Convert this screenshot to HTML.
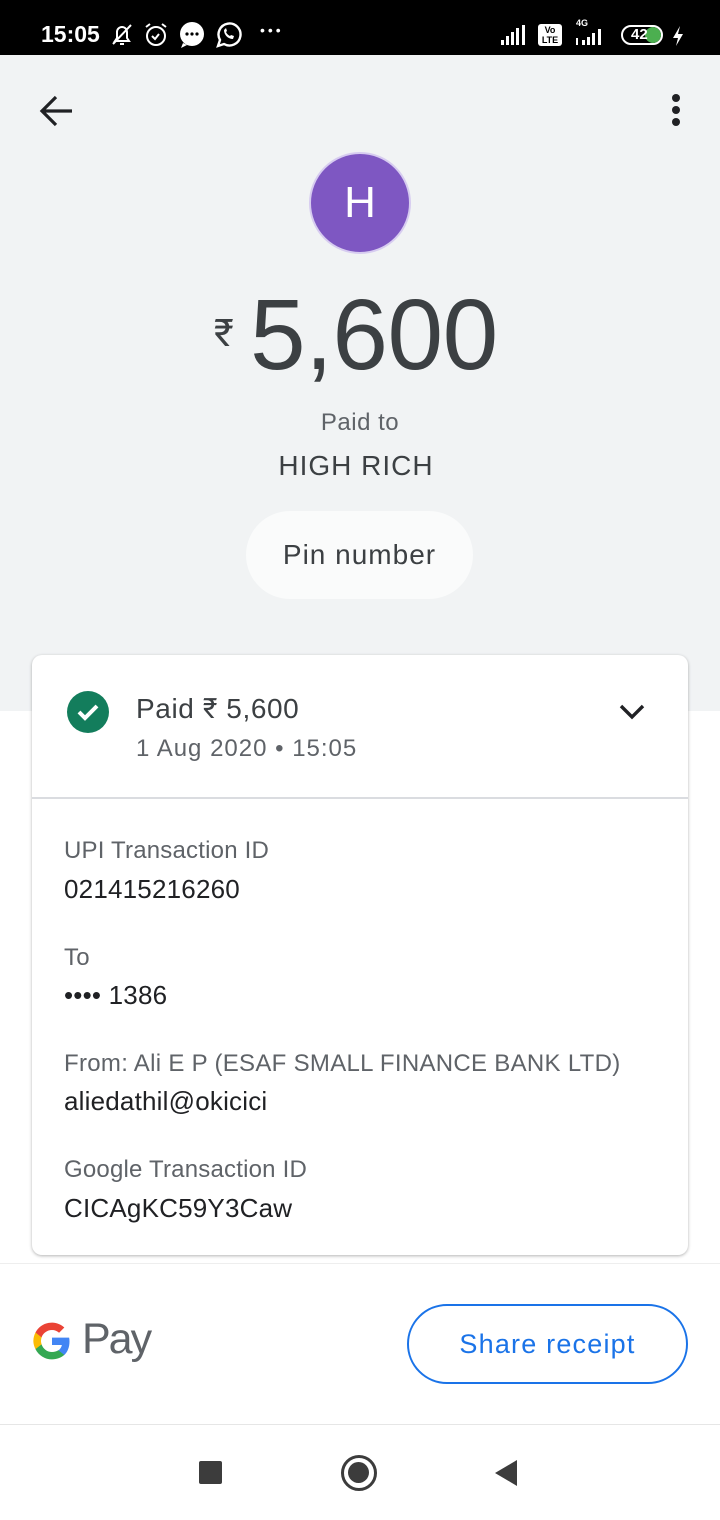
<!DOCTYPE html>
<html><head><meta charset="utf-8"><style>
*{margin:0;padding:0;box-sizing:border-box}
body{width:720px;height:1520px;background:#fff;font-family:"Liberation Sans",Roboto,sans-serif;position:relative;overflow:hidden;color:#3c4043}
.abs{position:absolute}
.sb{top:0;left:0;width:720px;height:55px;background:#000;color:#fff}
.top{top:55px;left:0;width:720px;height:656px;background:#f1f3f4}
.card{left:32px;top:655px;width:656px;height:600px;background:#fff;border-radius:10px;box-shadow:0 1px 3px rgba(0,0,0,.3)}
.lbl{font-size:24px;color:#5f6368;left:32px;letter-spacing:.2px}
.val{font-size:26px;color:#202124;left:32px;letter-spacing:.2px}
</style></head><body>
<div class="abs sb">
<div class="abs" style="left:41px;top:21px;font-size:23px;font-weight:bold">15:05</div>
<svg class="abs" style="left:110px;top:22px" width="24" height="26" viewBox="0 0 24 26" fill="none" stroke="#fff" stroke-width="2"><path d="M5 19h14l-2-3V10a5 5 0 0 0-10 0v6z M10 22h4 M3 22L21 3"/></svg>
<svg class="abs" style="left:143px;top:22px" width="26" height="26" viewBox="0 0 26 26" fill="none" stroke="#fff" stroke-width="2"><circle cx="13" cy="14" r="9"/><path d="M9 14l3 3 4-5 M3 5l4-3 M23 5l-4-3"/></svg>
<svg class="abs" style="left:178px;top:21px" width="28" height="28" viewBox="0 0 28 28"><circle cx="14" cy="13" r="12" fill="#fff"/><path d="M5 22l-2 5 6-3z" fill="#fff"/><circle cx="9" cy="13" r="1.6"/><circle cx="14" cy="13" r="1.6"/><circle cx="19" cy="13" r="1.6"/></svg>
<svg class="abs" style="left:214px;top:21px" width="28" height="28" viewBox="0 0 28 28" fill="none" stroke="#fff" stroke-width="2.4"><path d="M4 25l2-6a11 11 0 1 1 4 4z"/><path d="M10 9c0 5 4 9 9 9l1-3-3-1-1 1c-2-1-3-2-4-4l1-1-1-3z" fill="#fff" stroke="none"/></svg>
<div class="abs" style="left:260px;top:22px;font-size:14px;letter-spacing:3px">•••</div>
<svg class="abs" style="left:500px;top:24px" width="30" height="22"><rect x="1" y="16" width="3" height="5" fill="#fff"/><rect x="6" y="12" width="3" height="9" fill="#fff"/><rect x="11" y="8" width="3" height="13" fill="#fff"/><rect x="16" y="4" width="3" height="17" fill="#fff"/><rect x="22" y="1" width="3" height="20" fill="#fff"/></svg>
<div class="abs" style="left:538px;top:24px;width:24px;height:22px;background:#fff;border-radius:3px;color:#000;font-size:9px;font-weight:bold;line-height:10px;text-align:center;padding-top:1px">Vo<br>LTE</div>
<div class="abs" style="left:576px;top:18px;font-size:9px;font-weight:bold">4G</div>
<svg class="abs" style="left:572px;top:28px" width="40" height="18"><rect x="4" y="10" width="2" height="7" fill="#fff"/><rect x="10" y="12" width="3" height="5" fill="#fff"/><rect x="15" y="9" width="3" height="8" fill="#fff"/><rect x="20" y="5" width="3" height="12" fill="#fff"/><rect x="26" y="1" width="3" height="16" fill="#fff"/></svg>
<div class="abs" style="left:621px;top:25px;width:42px;height:20px;border:2px solid #fff;border-radius:10px;overflow:hidden"><div style="position:absolute;right:0;top:0;width:16px;height:16px;background:#4caf50;border-radius:8px"></div><div style="position:absolute;left:8px;top:-1px;font-size:15px;font-weight:bold">42</div></div>
<svg class="abs" style="left:671px;top:25px" width="14" height="22"><path d="M9 1L2 13h5l-2 8 7-12H7z" fill="#fff"/></svg>
</div>
<div class="abs top"></div>
<svg class="abs" style="left:38px;top:94px" width="36" height="34" viewBox="0 0 36 34" fill="none" stroke="#202124" stroke-width="3.2"><path d="M34 17H5 M18 3L4 17l14 14"/></svg>
<div class="abs" style="left:672px;top:94px"><div style="width:8px;height:8px;border-radius:4px;background:#202124;margin-bottom:4px"></div><div style="width:8px;height:8px;border-radius:4px;background:#202124;margin-bottom:4px"></div><div style="width:8px;height:8px;border-radius:4px;background:#202124"></div></div>
<div class="abs" style="left:309px;top:152px;width:102px;height:102px;border-radius:51px;background:#7e57c2;border:2px solid #d7ccf0;color:#fff;font-size:44px;text-align:center;line-height:98px">H</div>
<div class="abs" style="left:214px;top:312px;font-size:38px;color:#3c4043">₹</div>
<div class="abs" style="left:250px;top:280px;font-size:100px;color:#3c4043;letter-spacing:-0.5px;line-height:110px">5,600</div>
<div class="abs" style="left:0;width:720px;text-align:center;top:409px;font-size:24px;color:#5f6368;letter-spacing:.5px">Paid to</div>
<div class="abs" style="left:0;width:712px;text-align:center;top:450px;font-size:28px;color:#3c4043;letter-spacing:1px">HIGH RICH</div>
<div class="abs" style="left:246px;top:511px;width:227px;height:88px;border-radius:44px;background:#fafbfb;font-size:28px;line-height:88px;text-align:center;color:#3c4043;letter-spacing:1px">Pin number</div>
<div class="abs card">
<svg class="abs" style="left:35px;top:36px" width="42" height="42"><circle cx="21" cy="21" r="21" fill="#137d5c"/><path d="M12 21l6 6 12-12" stroke="#fff" stroke-width="4" fill="none"/></svg>
<div class="abs" style="left:104px;top:37px;font-size:28px;color:#3c4043;letter-spacing:.6px">Paid ₹ 5,600</div>
<div class="abs" style="left:104px;top:80px;font-size:24px;color:#5f6368;letter-spacing:1px">1 Aug 2020 • 15:05</div>
<svg class="abs" style="left:587px;top:48px" width="26" height="18" fill="none" stroke="#202124" stroke-width="3.4"><path d="M2 3l11 11 11-11"/></svg>
<div class="abs" style="left:0;top:142px;width:656px;height:2px;background:#dadce0"></div>
<div class="abs lbl" style="top:182px">UPI Transaction ID</div>
<div class="abs val" style="top:219px">021415216260</div>
<div class="abs lbl" style="top:289px">To</div>
<div class="abs val" style="top:325px">•••• 1386</div>
<div class="abs lbl" style="top:395px;letter-spacing:.3px">From: Ali E P (ESAF SMALL FINANCE BANK LTD)</div>
<div class="abs val" style="top:431px">aliedathil@okicici</div>
<div class="abs lbl" style="top:501px">Google Transaction ID</div>
<div class="abs val" style="top:538px">CICAgKC59Y3Caw</div>
</div>
<div class="abs" style="left:0;top:1263px;width:720px;height:1px;background:#eee"></div>
<svg class="abs" style="left:31px;top:1320px" width="42" height="42" viewBox="0 0 48 48"><path d="M44 24.5c0-1.5-.1-3-.4-4.4H24v8.4h11.3a9.7 9.7 0 0 1-4.2 6.3v5.3h6.8C41.8 36.5 44 31 44 24.5z" fill="#4285f4"/><path d="M24 45c5.7 0 10.5-1.9 14-5.1l-6.8-5.3c-1.9 1.3-4.3 2-7.2 2-5.5 0-10.2-3.7-11.9-8.8H5.1v5.5A21 21 0 0 0 24 45z" fill="#34a853"/><path d="M12.1 27.8a12.6 12.6 0 0 1 0-8V14.3H5.1a21 21 0 0 0 0 19z" fill="#fbbc04"/><path d="M24 11.4c3.1 0 5.9 1.1 8.1 3.2l6-6A21 21 0 0 0 5.1 14.3l7 5.5C13.8 14.9 18.5 11.4 24 11.4z" fill="#ea4335"/></svg>
<div class="abs" style="left:82px;top:1315px;font-size:43px;color:#5f6368;letter-spacing:-2px">Pay</div>
<div class="abs" style="left:407px;top:1304px;width:281px;height:80px;border:2px solid #1a73e8;border-radius:40px;color:#1a73e8;font-size:27px;text-align:center;line-height:76px;letter-spacing:1.2px">Share receipt</div>
<div class="abs" style="left:0;top:1424px;width:720px;height:1px;background:#e6e6e6"></div>
<div class="abs" style="left:199px;top:1461px;width:23px;height:23px;background:#3c3c3c;border-radius:2px"></div>
<div class="abs" style="left:341px;top:1455px;width:36px;height:36px;border-radius:18px;border:3.5px solid #3c3c3c"><div style="margin:4px;width:21px;height:21px;border-radius:11px;background:#3c3c3c"></div></div>
<svg class="abs" style="left:493px;top:1459px" width="26" height="28"><path d="M24 1v26L2 14z" fill="#3c3c3c"/></svg>
</body></html>
